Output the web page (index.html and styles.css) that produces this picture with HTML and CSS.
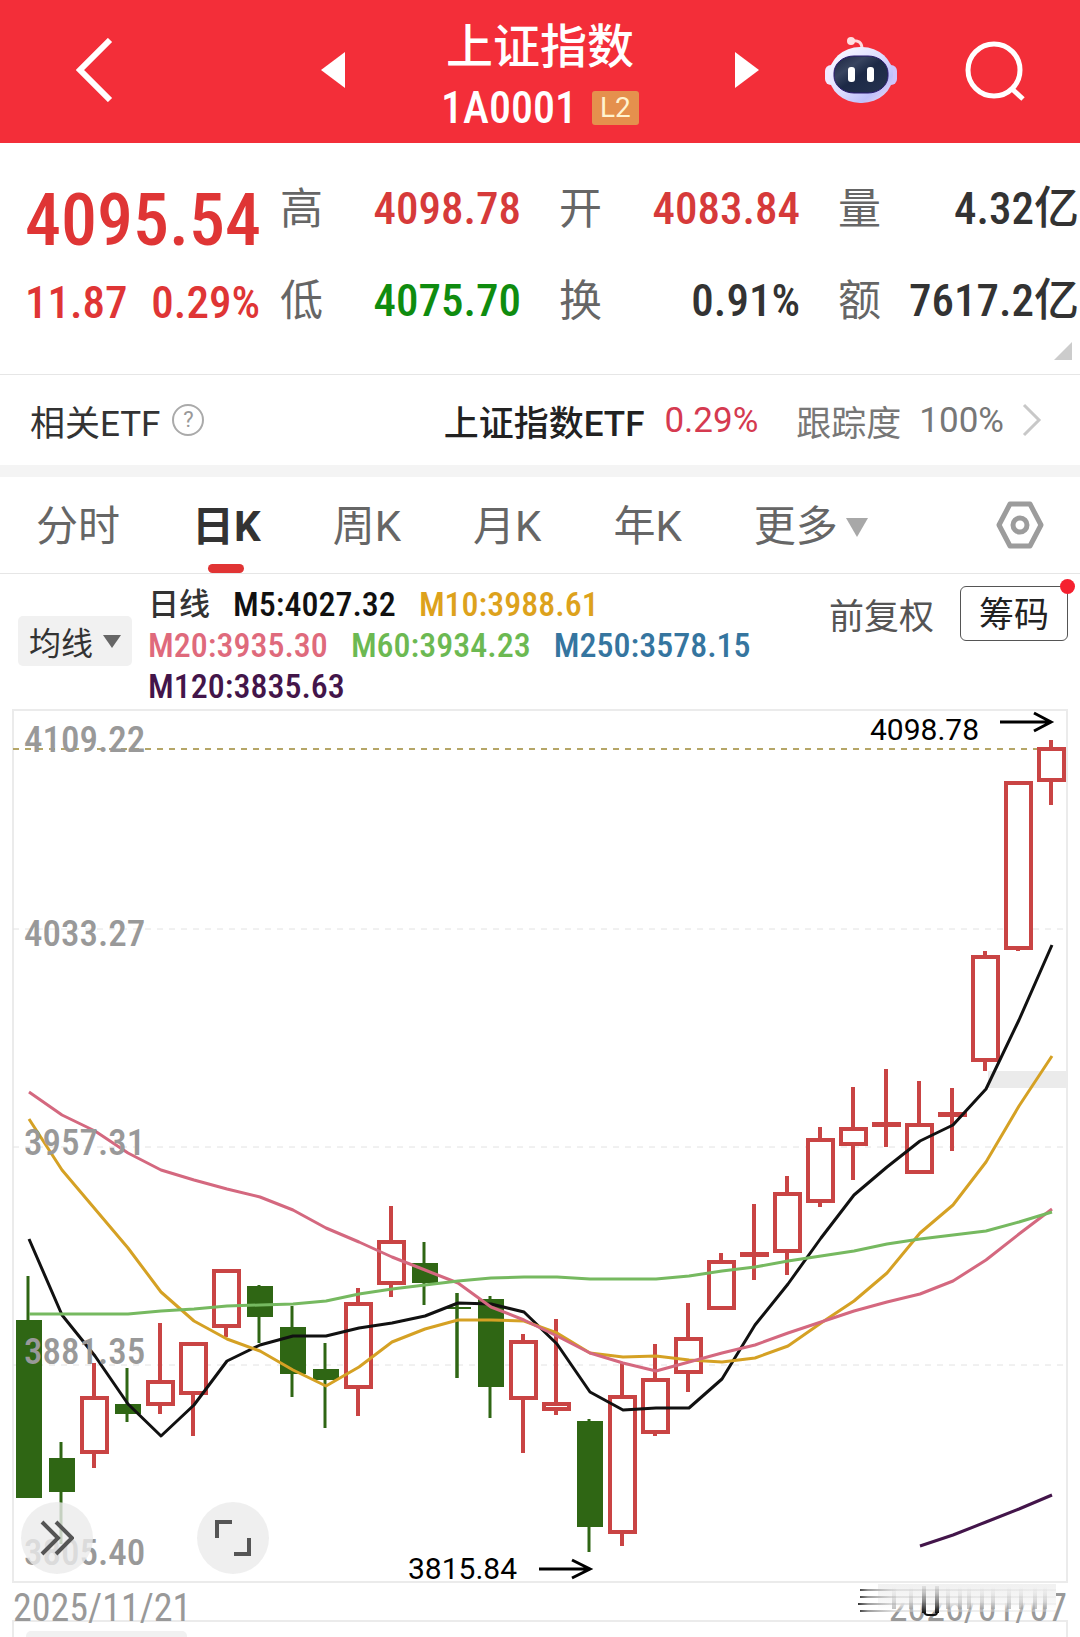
FILE: index.html
```html
<!DOCTYPE html>
<html lang="zh-CN">
<head>
  <meta charset="UTF-8">
  <meta name="viewport" content="width=device-width, initial-scale=1.0">
  <title>上证指数 1A0001</title>
  <link rel="stylesheet" href="styles.css">
</head>
<body>
  <header class="topbar">
    <div class="topbar-left">
      <button class="icon-btn" aria-label="返回">
        <svg width="37" height="64" viewBox="0 0 37 64"><path d="M34 2 L4 32 L34 62" fill="none" stroke="#fff" stroke-width="6"/></svg>
      </button>
      <button class="icon-btn" aria-label="上一个">
        <svg width="24" height="36" viewBox="0 0 24 36"><path d="M24 0 V36 L0 18 Z" fill="#fff"/></svg>
      </button>
    </div>
    <div class="topbar-title">
      <h1>上证指数</h1>
      <div class="code">1A0001 <span class="level">L2</span></div>
    </div>
    <div class="topbar-right">
      <button class="icon-btn" aria-label="下一个">
        <svg width="24" height="36" viewBox="0 0 24 36"><path d="M0 0 V36 L24 18 Z" fill="#fff"/></svg>
      </button>
      <button class="icon-btn robot" aria-label="智能助手">
        <svg width="72" height="68" viewBox="0 0 72 68">
          <defs>
            <linearGradient id="head" x1="0" y1="0" x2="1" y2="1">
              <stop offset="0" stop-color="#fff"/>
              <stop offset="0.5" stop-color="#dcdcff"/>
              <stop offset="0.75" stop-color="#bfc0fa"/>
              <stop offset="1" stop-color="#f6dcf0"/>
            </linearGradient>
            <linearGradient id="face" x1="0" y1="0" x2="1" y2="1">
              <stop offset="0" stop-color="#1a2440"/>
              <stop offset="0.3" stop-color="#38445f"/>
              <stop offset="0.5" stop-color="#1c2946"/>
              <stop offset="1" stop-color="#26334f"/>
            </linearGradient>
          </defs>
          <path d="M26 5 Q37 3 37 13" fill="none" stroke="#ffd9dc" stroke-width="3"/>
          <circle cx="26" cy="5" r="4" fill="#ffdfe1"/>
          <rect x="0" y="29" width="12" height="20" rx="6" fill="#f3e8ff"/>
          <rect x="60" y="29" width="12" height="20" rx="6" fill="#cfc4fb"/>
          <rect x="4" y="11" width="64" height="56" rx="31" ry="28" fill="url(#head)"/>
          <rect x="9" y="20" width="54" height="37" rx="20" ry="17" fill="url(#face)" stroke="#2b1a70" stroke-width="1"/>
          <rect x="23" y="31" width="7" height="15" rx="3" fill="#fff"/>
          <rect x="42" y="31" width="7" height="15" rx="3" fill="#fff"/>
        </svg>
      </button>
      <button class="icon-btn" aria-label="搜索">
        <svg width="62" height="62" viewBox="0 0 62 62"><g fill="none" stroke="#fff" stroke-width="5"><circle cx="31" cy="31" r="26"/><path d="M49 50 L60 60"/></g></svg>
      </button>
    </div>
  </header>

  <section class="quote">
    <div class="price">
      <div class="price-now">4095.54</div>
      <div class="price-change"><span>11.87</span><span>0.29%</span></div>
    </div>
    <dl class="stats">
      <div><dt>高</dt><dd class="up">4098.78</dd></div>
      <div><dt>开</dt><dd class="up">4083.84</dd></div>
      <div><dt>量</dt><dd>4.32亿</dd></div>
      <div><dt>低</dt><dd class="down">4075.70</dd></div>
      <div><dt>换</dt><dd>0.91%</dd></div>
      <div><dt>额</dt><dd>7617.2亿</dd></div>
    </dl>
    <span class="corner"></span>
  </section>

  <a class="etf" href="#etf">
    <span class="etf-label">相关ETF</span>
    <span class="help">?</span>
    <span class="etf-name">上证指数ETF</span>
    <span class="etf-change">0.29%</span>
    <span class="etf-track">跟踪度</span>
    <span class="etf-rate">100%</span>
    <svg width="20" height="34" viewBox="0 0 20 34"><path d="M2 2 L17 17 L2 32" fill="none" stroke="#c8c8c8" stroke-width="3"/></svg>
  </a>

  <nav class="tabs">
    <a href="#time">分时</a>
    <a href="#day" class="active">日K</a>
    <a href="#week">周K</a>
    <a href="#month">月K</a>
    <a href="#year">年K</a>
    <a href="#more">更多<svg class="more" width="22" height="19" viewBox="0 0 22 19"><path d="M0 0 H22 L11 19 Z" fill="#a8a8a8"/></svg></a>
    <button class="icon-btn setting" aria-label="设置">
      <svg width="48" height="48" viewBox="0 0 48 48"><g fill="none" stroke="#9c9c9c" stroke-width="5" stroke-linejoin="round"><path d="M14 3 H34 L45 24 L34 45 H14 L3 24 Z"/><circle cx="24" cy="24" r="7"/></g></svg>
    </button>
  </nav>

  <section class="indicators">
    <button class="ma-btn">均线<svg width="18" height="13" viewBox="0 0 18 13"><path d="M0 0 H18 L9 13 Z" fill="#666"/></svg></button>
    <div class="ma-list">
      <span class="ma-name">日线</span>
      <span class="m5">M5:4027.32</span>
      <span class="m10">M10:3988.61</span>
      <span class="m20">M20:3935.30</span>
      <span class="m60">M60:3934.23</span>
      <span class="m250">M250:3578.15</span>
      <span class="m120">M120:3835.63</span>
    </div>
    <button class="adjust">前复权</button>
    <button class="chips">筹码</button>
  </section>

  <section class="chart">
    <svg id="kline" viewBox="0 700 1080 884">
      <rect class="frame" x="13" y="710" width="1054" height="872"/>
      <g class="grid">
        <path d="M13 929 H1067 M13 1147 H1067 M13 1365 H1067"/>
      </g>
      <rect x="988" y="1071" width="79" height="17" fill="#ebebeb"/>
      <path class="last-price" d="M13 749 H1040"/>
      <g id="candles"></g>
      <g id="lines"></g>
      <g class="axis">
        <text x="24" y="752">4109.22</text>
        <text x="24" y="946">4033.27</text>
        <text x="24" y="1155">3957.31</text>
        <text x="24" y="1364">3881.35</text>
        <text x="24" y="1565">3805.40</text>
      </g>
      <g class="mark">
        <text x="870" y="740">4098.78</text>
        <path d="M1000 722 H1051 M1034 713 L1051 722 L1034 731"/>
        <text x="408" y="1579">3815.84</text>
        <path d="M539 1569 H590 M572 1560 L590 1569 L572 1578"/>
      </g>
    </svg>
    <button class="fab fab-next" aria-label="后移">
      <svg width="34" height="36" viewBox="0 0 34 36"><path d="M2 2 L18 18 L2 34 M16 2 L32 18 L16 34" fill="none" stroke="#555" stroke-width="4"/></svg>
    </button>
    <button class="fab fab-full" aria-label="全屏">
      <svg width="38" height="38" viewBox="0 0 38 38"><path d="M3 19 V3 H18 M35 19 V35 H20" fill="none" stroke="#555" stroke-width="4"/></svg>
    </button>
  </section>

  <div class="dates">
    <span>2025/11/21</span>
    <span>2026/01/07</span>
    <svg class="smear" width="206" height="36" viewBox="0 0 206 36">
      <defs>
        <linearGradient id="fade" x1="0" y1="0" x2="0" y2="1">
          <stop offset="0" stop-color="#f1f1f1"/>
          <stop offset="0.65" stop-color="#f7f7f7"/>
          <stop offset="1" stop-color="#fff" stop-opacity="0"/>
        </linearGradient>
        <linearGradient id="streak" gradientUnits="userSpaceOnUse" x1="0" y1="0" x2="198" y2="0">
          <stop offset="0" stop-color="#333"/>
          <stop offset="0.05" stop-color="#999"/>
          <stop offset="0.2" stop-color="#ccc" stop-opacity="0.5"/>
          <stop offset="1" stop-color="#ddd" stop-opacity="0.3"/>
        </linearGradient>
        <linearGradient id="column" x1="0" y1="0" x2="0" y2="1">
          <stop offset="0" stop-color="#bbb" stop-opacity="0"/>
          <stop offset="1" stop-color="#999" stop-opacity="0.6"/>
        </linearGradient>
        <linearGradient id="dark" x1="0" y1="0" x2="0" y2="1">
          <stop offset="0" stop-color="#999" stop-opacity="0.2"/>
          <stop offset="1" stop-color="#111"/>
        </linearGradient>
      </defs>
      <rect x="20" y="0" width="178" height="28" fill="url(#fade)"/>
      <g fill="url(#streak)">
        <rect x="2" y="5" width="196" height="2"/>
        <rect x="2" y="12" width="196" height="2"/>
        <rect x="0" y="19" width="198" height="2"/>
        <rect x="2" y="26" width="196" height="2"/>
      </g>
      <g fill="url(#column)">
        <rect x="34" y="3" width="4" height="22"/>
        <rect x="51" y="3" width="4" height="22"/>
        <rect x="88" y="3" width="4" height="22"/>
        <rect x="100" y="3" width="4" height="22"/>
        <rect x="109" y="3" width="4" height="22"/>
        <rect x="122" y="3" width="4" height="22"/>
        <rect x="133" y="3" width="4" height="22"/>
        <rect x="149" y="3" width="4" height="22"/>
        <rect x="161" y="3" width="4" height="22"/>
        <rect x="175" y="3" width="4" height="22"/>
        <rect x="185" y="3" width="4" height="22"/>
      </g>
      <rect x="64" y="2" width="4" height="27" fill="url(#dark)"/>
      <rect x="77" y="2" width="4" height="27" fill="url(#dark)"/>
      <path d="M66 28 Q67 31 70 31 H76 Q79 31 79 28" fill="none" stroke="#111" stroke-width="2"/>
    </svg>
  </div>

  <section class="volume">
    <span class="volume-pill"></span>
  </section>

  <script src="chart.js"></script>
</body>
</html>
```

FILE: styles.css
```css
* {
  box-sizing: border-box;
}

body {
  margin: 0;
  background-color: #fff;
  color: #333;
  font-family: Roboto, "Noto Sans CJK SC", sans-serif;
}

a {
  color: inherit;
  text-decoration: none;
}

button {
  border: none;
  padding: 0;
  background: none;
  color: inherit;
  font-family: inherit;
  cursor: pointer;
}

svg {
  display: block;
}

/* top bar */
.topbar {
  display: grid;
  grid-template-columns: 1fr auto 1fr;
  align-items: center;
  height: 143px;
  padding-bottom: 4px;
  background-color: #f32e39;
  color: #fff;
}

.topbar-left,
.topbar-right {
  display: flex;
  align-items: center;
}

.topbar-left {
  justify-content: space-between;
  padding-left: 76px;
}

.topbar-right {
  gap: 66px;
}

.topbar-title {
  margin: 0 96px;
  padding-top: 10px;
  text-align: center;
}

.topbar-title h1 {
  margin: 0;
  font-size: 47px;
  font-weight: 500;
  line-height: 66px;
}

.code {
  display: flex;
  align-items: center;
  gap: 15px;
  font-family: "Roboto Condensed", Roboto, sans-serif;
  font-size: 44px;
  font-weight: 500;
  line-height: 56px;
}

.level {
  width: 47px;
  border-radius: 3px;
  background-color: #e5904d;
  color: #fff3d0;
  font-family: Roboto, sans-serif;
  font-size: 28px;
  font-weight: 400;
  line-height: 34px;
}

/* quote */
.quote {
  position: relative;
  display: flex;
  height: 232px;
  padding: 32px 1px 0 25px;
  border-bottom: 1px solid #e6e6e6;
  font-family: "Roboto Condensed", "Noto Sans CJK SC", sans-serif;
  font-weight: 500;
}

.price {
  width: 255px;
  color: #df3535;
}

.price-now {
  font-size: 72px;
  line-height: 92px;
}

.price-change {
  display: flex;
  justify-content: space-between;
  padding-right: 20px;
  font-size: 45px;
  line-height: 72px;
}

.stats {
  flex: 1;
  display: grid;
  grid-template-columns: repeat(3, 1fr);
  grid-auto-rows: 92px;
  column-gap: 38px;
  margin: 0;
  margin-top: -12px;
}

.stats div {
  display: flex;
  justify-content: space-between;
  align-items: center;
  line-height: 64px;
}

.stats dt {
  color: #666;
  font-size: 43px;
  font-weight: 400;
}

.stats dd {
  margin: 0;
  font-size: 45px;
  white-space: nowrap;
}

.stats .up {
  color: #d63a3a;
}

.stats .down {
  color: #0f8c0f;
}

.corner {
  position: absolute;
  right: 8px;
  bottom: 14px;
  border-left: 18px solid transparent;
  border-bottom: 18px solid #ccc;
}

/* related etf */
.etf {
  display: flex;
  align-items: center;
  height: 102px;
  padding: 0 38px 0 30px;
  border-bottom: 12px solid #f4f4f4;
  font-size: 35px;
}

.help {
  width: 32px;
  height: 32px;
  margin-left: 12px;
  border: 2px solid #aaa;
  border-radius: 50%;
  color: #999;
  font-size: 22px;
  line-height: 28px;
  text-align: center;
}

.etf-name {
  margin-left: auto;
  color: #222;
  font-weight: 500;
}

.etf-change {
  margin-left: 20px;
  color: #d53a50;
}

.etf-track {
  margin-left: 38px;
  color: #777;
}

.etf-rate {
  margin: 0 18px;
  color: #777;
}

/* tabs */
.tabs {
  display: flex;
  align-items: center;
  gap: 72px;
  height: 97px;
  padding: 0 36px;
  border-bottom: 1px solid #e6e6e6;
  color: #666;
  font-size: 42px;
}

.tabs a {
  position: relative;
  display: flex;
  align-items: center;
  padding-top: 4px;
  line-height: 92px;
}

.tabs .active {
  color: #333;
  font-weight: 700;
}

.tabs .active::after {
  content: "";
  position: absolute;
  bottom: 0;
  left: 50%;
  width: 36px;
  height: 9px;
  margin-left: -18px;
  border-radius: 5px;
  background-color: #e13434;
}

.more {
  margin-left: 8px;
}

.setting {
  margin-left: auto;
}

/* moving averages */
.indicators {
  display: flex;
  align-items: flex-start;
  height: 126px;
  padding: 10px 12px 0 18px;
}

.ma-btn {
  display: flex;
  align-items: center;
  justify-content: center;
  gap: 10px;
  width: 114px;
  height: 50px;
  margin-top: 32px;
  border-radius: 5px;
  background-color: #f1f1f1;
  font-size: 32px;
}

.ma-list {
  flex: 1;
  display: flex;
  flex-wrap: wrap;
  column-gap: 23px;
  margin: 0 50px 0 16px;
  font-family: "Roboto Condensed", "Noto Sans CJK SC", sans-serif;
  font-size: 34px;
  font-weight: 500;
  line-height: 41px;
}

.ma-name {
  font-size: 31px;
}

.m5 { color: #111; }
.m10 { color: #dda21c; }
.m20 { color: #df6a7c; }
.m60 { color: #6cb952; }
.m250 { color: #35759f; }
.m120 { color: #43154a; }

.adjust {
  height: 58px;
  font-size: 35px;
  color: #555;
}

.chips {
  position: relative;
  width: 108px;
  height: 55px;
  margin: 2px 0 0 26px;
  border: 1px solid #555;
  border-radius: 6px;
  color: #222;
  font-size: 35px;
  line-height: 58px;
}

.chips::after {
  content: "";
  position: absolute;
  top: -8px;
  right: -8px;
  width: 15px;
  height: 15px;
  border-radius: 50%;
  background-color: #f5202f;
}

/* k line */
.chart {
  position: relative;
}

.chart #kline {
  width: 100%;
  overflow: visible;
}

.frame {
  fill: none;
  stroke: #ebebeb;
  stroke-width: 2;
}

.grid path {
  stroke: #e2e2e2;
  stroke-width: 1;
  stroke-dasharray: 6 6;
}

.last-price {
  stroke: #b5a667;
  stroke-width: 2;
  stroke-dasharray: 6 6;
}

.wick-up { stroke: #c94444; stroke-width: 4; }
.wick-down { stroke: #2f6614; stroke-width: 3; }
.body-up { fill: #fff; stroke: #c94444; stroke-width: 4; }
.body-down { fill: #2f6614; }

#lines polyline {
  fill: none;
  stroke-width: 3;
  stroke-linejoin: round;
}

.line-m5 { stroke: #111; }
.line-m10 { stroke: #d5a124; }
.line-m20 { stroke: #d4687f; }
.line-m60 { stroke: #76b960; }
.line-m120 { stroke: #43154a; }

.axis {
  fill: #999;
  font-family: "Roboto Condensed", Roboto, sans-serif;
  font-size: 37px;
  font-weight: 500;
}

.mark text {
  fill: #000;
  font-size: 30px;
}

.mark path {
  fill: none;
  stroke: #000;
  stroke-width: 3;
}

.fab {
  position: absolute;
  bottom: 10px;
  display: flex;
  align-items: center;
  justify-content: center;
  width: 72px;
  height: 72px;
  border-radius: 50%;
  background-color: rgba(235, 235, 235, 0.8);
}

.fab-next {
  left: 21px;
}

.fab-full {
  left: 197px;
}

.dates {
  position: relative;
  display: flex;
  justify-content: space-between;
  height: 36px;
  padding: 3px 13px 0;
  color: #999;
  font-family: "Roboto Condensed", Roboto, sans-serif;
  font-size: 38px;
  line-height: 42px;
}

.smear {
  position: absolute;
  top: 0;
  right: 16px;
}

.volume {
  height: 17px;
  margin: 0 12px;
  padding: 9px 12px 0;
  border: 2px solid #ebebeb;
  border-bottom: none;
  overflow: hidden;
}

.volume-pill {
  display: block;
  width: 161px;
  height: 40px;
  border-radius: 5px;
  background-color: #f1f1f1;
}
```

FILE: chart.js
```js
const NS = "http://www.w3.org/2000/svg";
const STEP = 33;
const FIRST = 28;

// direction, high, body top, body bottom, low
const candles = [
  ["down", 1276, 1320, 1498, 1498],
  ["down", 1442, 1458, 1492, 1544],
  ["up", 1363, 1396, 1454, 1468],
  ["down", 1368, 1404, 1414, 1422],
  ["up", 1323, 1380, 1406, 1414],
  ["up", 1342, 1342, 1395, 1436],
  ["up", 1269, 1269, 1328, 1337],
  ["down", 1285, 1286, 1317, 1343],
  ["down", 1306, 1327, 1374, 1397],
  ["down", 1343, 1369, 1380, 1428],
  ["up", 1288, 1302, 1389, 1416],
  ["up", 1206, 1240, 1285, 1297],
  ["down", 1242, 1263, 1283, 1305],
  ["down", 1293, 1307, 1309, 1378],
  ["down", 1296, 1299, 1387, 1418],
  ["up", 1334, 1340, 1400, 1453],
  ["up", 1319, 1402, 1411, 1415],
  ["down", 1419, 1421, 1527, 1552],
  ["up", 1363, 1395, 1534, 1546],
  ["up", 1344, 1378, 1434, 1436],
  ["up", 1303, 1337, 1374, 1392],
  ["up", 1253, 1260, 1310, 1310],
  ["up", 1204, 1252, 1257, 1280],
  ["up", 1176, 1192, 1253, 1275],
  ["up", 1127, 1138, 1203, 1207],
  ["up", 1087, 1127, 1146, 1180],
  ["up", 1069, 1122, 1126, 1147],
  ["up", 1081, 1123, 1174, 1174],
  ["up", 1088, 1112, 1115, 1151],
  ["up", 951, 955, 1062, 1071],
  ["up", 781, 781, 950, 951],
  ["up", 740, 747, 782, 805]
];

// start = index of the first candle the line is drawn for
const averages = [
  { name: "m5", start: 0, points: [1239, 1315, 1356, 1404, 1436, 1405, 1361, 1345, 1336, 1336, 1328, 1323, 1316, 1303, 1304, 1312, 1344, 1392, 1410, 1408, 1408, 1379, 1325, 1284, 1238, 1195, 1167, 1141, 1125, 1089, 1020, 945] },
  { name: "m10", start: 0, points: [1119, 1170, 1209, 1248, 1292, 1321, 1339, 1351, 1370, 1386, 1367, 1342, 1329, 1320, 1320, 1321, 1333, 1353, 1357, 1356, 1360, 1362, 1358, 1346, 1323, 1301, 1273, 1233, 1205, 1162, 1106, 1056] },
  { name: "m20", start: 0, points: [1092, 1115, 1131, 1153, 1170, 1180, 1189, 1197, 1210, 1228, 1242, 1257, 1270, 1283, 1307, 1320, 1336, 1353, 1363, 1371, 1362, 1353, 1345, 1333, 1322, 1311, 1302, 1294, 1281, 1260, 1234, 1209] },
  { name: "m60", start: 0, points: [1314, 1314, 1314, 1314, 1311, 1309, 1306, 1305, 1304, 1301, 1294, 1289, 1285, 1281, 1278, 1277, 1277, 1279, 1279, 1279, 1276, 1271, 1267, 1261, 1256, 1251, 1244, 1239, 1235, 1231, 1222, 1212] },
  { name: "m120", start: 27, points: [1546, 1535, 1522, 1509, 1495] }
];

function add(parent, tag, attrs) {
  const el = document.createElementNS(NS, tag);
  for (const key in attrs) el.setAttribute(key, attrs[key]);
  parent.appendChild(el);
}

const candleGroup = document.getElementById("candles");
candles.forEach(function ([dir, high, top, bottom, low], i) {
  const x = FIRST + i * STEP;
  add(candleGroup, "line", { class: "wick-" + dir, x1: x, x2: x, y1: high, y2: low });
  if (dir === "up") {
    add(candleGroup, "rect", { class: "body-up", x: x - 12, y: top + 2, width: 25, height: Math.max(bottom - top - 4, 1) });
  } else {
    add(candleGroup, "rect", { class: "body-down", x: x - 12, y: top, width: 26, height: bottom - top });
  }
  // doji candles keep their wick visible through the body
  if (bottom - top < 6) {
    add(candleGroup, "line", { class: "wick-" + dir, x1: x, x2: x, y1: high, y2: low });
  }
});

const lineGroup = document.getElementById("lines");
averages.forEach(function (avg) {
  const points = avg.points.map(function (y, i) {
    return (FIRST + 1 + (avg.start + i) * STEP) + "," + y;
  });
  add(lineGroup, "polyline", { class: "line-" + avg.name, points: points.join(" ") });
});
```
